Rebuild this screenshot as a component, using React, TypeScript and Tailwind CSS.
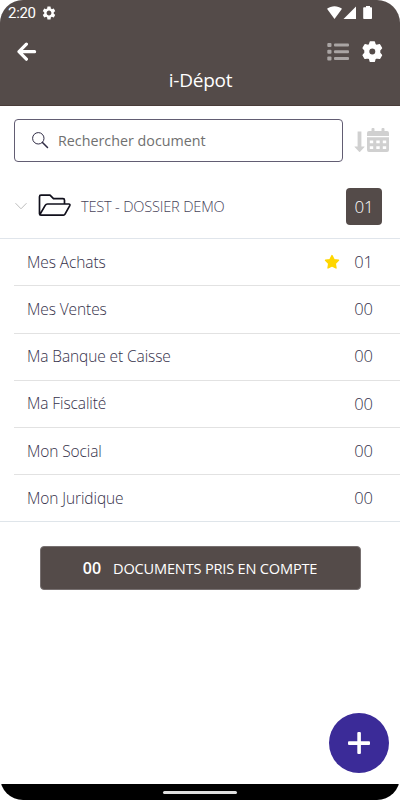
import { MdSettings } from "react-icons/md";

type Folder = {
  name: string;
  count: string;
  starred?: boolean;
};

const folders: Folder[] = [
  { name: "Mes Achats", count: "01", starred: true },
  { name: "Mes Ventes", count: "00" },
  { name: "Ma Banque et Caisse", count: "00" },
  { name: "Ma Fiscalité", count: "00" },
  { name: "Mon Social", count: "00" },
  { name: "Mon Juridique", count: "00" },
];

function StatusBar() {
  return (
    <div className="flex h-[25px] items-center pl-2 pr-7 font-['Roboto',sans-serif] text-white">
      <span className="pt-px text-[15px] leading-[25px] tracking-[-0.3px]">2:20</span>
      <MdSettings className="ml-[5px] size-4" />
      <svg className="ml-auto" width="46" height="14" viewBox="0 0 46 14" fill="currentColor">
        <path d="M1 2.8C5.2-.6 11.8-.6 16 2.8L8.5 13z" />
        <path d="M30 .5V13H17.5z" />
        <path d="M38 1.2h2V0h4v1.2h1.2q.8 0 .8.8v10.2q0 .8-.8.8H38q-.8 0-.8-.8V2q0-.8.8-.8z" />
      </svg>
    </div>
  );
}

function GearIcon() {
  return (
    <svg className="ml-[11px]" width="24" height="24" viewBox="0 0 24 24" fill="currentColor">
      <path
        fillRule="evenodd"
        stroke="currentColor"
        strokeWidth="1.4"
        strokeLinejoin="round"
        d="M10.3 2h4l.7 2.5 1.7 1 2.9-.7 1.9 3.3-1.9 2.1v2.8l1.9 2.1-1.9 3.3-2.9-.7-1.7 1-.7 2.5h-4l-.7-2.5-1.7-1-2.9.7-1.9-3.3 1.9-2.1v-2.8L3.1 8.1 5 4.8l2.9.7 1.7-1zM12.3 7.9a3.7 3.7 0 1 0 0 7.4 3.7 3.7 0 0 0 0-7.4z"
      />
    </svg>
  );
}

function Header() {
  return (
    <header className="h-[106px] border-b border-[#493c39] bg-[#544b49] text-white">
      <StatusBar />
      <div className="flex h-[54px] items-center pl-[17px] pr-4">
        <svg
          width="20"
          height="20"
          viewBox="0 0 20 20"
          fill="none"
          stroke="currentColor"
          strokeWidth="3.2"
          strokeLinecap="round"
          strokeLinejoin="round"
        >
          <path d="M9.4 2.2 2 9.7l7.4 7.5M3 9.7h14.6" />
        </svg>
        <svg className="ml-auto" width="22" height="18" viewBox="0 0 22 18" fill="#aaa5a4">
          <rect x=".3" y="0" width="4.2" height="4" rx="1" />
          <rect x=".3" y="6.8" width="4.2" height="4" rx="1" />
          <rect x=".3" y="13.6" width="4.2" height="4" rx="1" />
          <rect x="7" y=".5" width="15" height="3" rx="1" />
          <rect x="7" y="7.3" width="15" height="3" rx="1" />
          <rect x="7" y="14.1" width="15" height="3" rx="1" />
        </svg>
        <GearIcon />
      </div>
      <h1 className="-mt-[13px] pl-px text-center text-[19px] leading-7 tracking-[-0.25px]">i-Dépot</h1>
    </header>
  );
}

function SortByDate() {
  return (
    <svg width="36" height="26" viewBox="0 0 36 26" fill="#d0d0d0">
      <path d="M3.6 3.4h3.8v15h2.8q.8 0 .3.7l-4.4 4.7q-.5.5-1 0L.6 19.1q-.5-.7.3-.7h2.7z" />
      <path d="M13 8V5q0-2 2-2h2.5V1q0-1 1-1h1q1 0 1 1v2h7V1q0-1 1-1h1q1 0 1 1v2H33q2 0 2 2v3z" />
      <path
        fillRule="evenodd"
        d="M13 9.3h22V22q0 2-2 2H15q-2 0-2-2zM15.8 12.4v2.8h3.4v-2.8zM22.3 12.4v2.8h3.4v-2.8zM28.8 12.4v2.8h3.4v-2.8zM15.8 18.2V21h3.4v-2.8zM22.3 18.2V21h3.4v-2.8zM28.8 18.2V21h3.4v-2.8z"
      />
    </svg>
  );
}

function SearchRow() {
  return (
    <div className="flex items-center pl-[14px] pr-[10px] pt-[13px]">
      <div className="flex h-[43px] w-[329px] items-center rounded border border-[#625d73] pl-[17px]">
        <svg width="17" height="17" viewBox="0 0 17 17" fill="none" stroke="#302c45">
          <circle cx="6.3" cy="6.3" r="5.7" />
          <path d="m10.5 10.5 5 5" strokeWidth="1.5" strokeLinecap="round" />
        </svg>
        <span className="ml-[9px] text-[14.3px] text-[#707070]">Rechercher document</span>
      </div>
      <div className="ml-[11px]">
        <SortByDate />
      </div>
    </div>
  );
}

function DossierRow() {
  return (
    <div className="mt-3 flex h-[65px] items-center border-b border-[#e0e5eb] pl-[15px] pr-[18px]">
      <svg width="12" height="8" viewBox="0 0 12 8" fill="none" stroke="#bcbcbc">
        <path d="M.5 1.2 6 6.8l5.5-5.6" />
      </svg>
      <svg
        className="-mt-[2px] ml-[11px]"
        width="34"
        height="24"
        viewBox="0 0 34 24"
        fill="none"
        stroke="#11101c"
        strokeWidth="1.7"
        strokeLinejoin="round"
      >
        <path d="M26.5 11V7.2q0-1.5-1.5-1.5H15.5L12 2.2H3Q1.5 2.2 1.5 3.7v17q0 1.5 1.5 1.5h22.5q1 0 1.5-1L31.8 12.6q.5-1.6-1-1.6H9.5Q8 11 7.2 12.4L2 21.4" />
      </svg>
      <span className="ml-[9px] pt-px text-[14.6px] font-light tracking-[-0.2px] text-[#48445a]">
        TEST - DOSSIER DEMO
      </span>
      <div className="ml-auto flex h-[37px] w-9 items-center justify-center rounded bg-[#544b49] pt-px text-[17px] font-light tracking-[-0.3px] text-white">
        01
      </div>
    </div>
  );
}

function FolderList() {
  return (
    <ul className="border-b border-[#dfe5ea]">
      {folders.map((folder) => (
        <li
          key={folder.name}
          className="ml-[14px] flex h-[47.3px] items-center border-b border-[#e2e2e2] pl-[13px] pr-[27px] font-light text-[#35314a] last:h-[46px] last:border-b-0"
        >
          <span className="text-[15.5px] tracking-[-0.1px]">{folder.name}</span>
          {folder.starred && (
            <svg className="-mt-px ml-auto mr-[14px]" width="16" height="16" viewBox="0 0 16 16" fill="#ffd600">
              <path
                d="m8 1.6 2 4 4.5.7-3.2 3.2.7 4.5-4-2.1L4 14l.7-4.5L1.5 6.3l4.5-.7z"
                stroke="#ffd600"
                strokeWidth="1.4"
                strokeLinejoin="round"
              />
            </svg>
          )}
          <span className={folder.starred ? "text-[16.5px]" : "ml-auto text-[16.5px]"}>{folder.count}</span>
        </li>
      ))}
    </ul>
  );
}

export default function App() {
  return (
    <div className="relative flex h-[800px] w-[400px] flex-col overflow-hidden rounded-[23px] bg-white font-['Open_Sans',sans-serif]">
      <Header />
      <main className="flex-1">
        <SearchRow />
        <DossierRow />
        <FolderList />
        <button className="mx-auto mt-6 flex h-11 w-[321px] items-center justify-center rounded border border-[#777070] bg-[#544b49] text-white">
          <span className="text-[16px] font-semibold">00</span>
          <span className="ml-3 text-[14.6px] tracking-[-0.2px]">DOCUMENTS PRIS EN COMPTE</span>
        </button>
      </main>
      <footer className="flex h-4 items-center justify-center bg-black">
        <div className="h-[3px] w-[74px] rounded-full bg-[#e0e0e0]" />
      </footer>
      <button className="absolute bottom-[27px] right-[11px] flex size-[60px] items-center justify-center rounded-full bg-[#3b2b98]">
        <svg width="22" height="22" viewBox="0 0 22 22" fill="white">
          <rect x="9.3" width="3.6" height="22" rx="1" />
          <rect y="9.3" width="22" height="3.6" rx="1" />
        </svg>
      </button>
    </div>
  );
}
